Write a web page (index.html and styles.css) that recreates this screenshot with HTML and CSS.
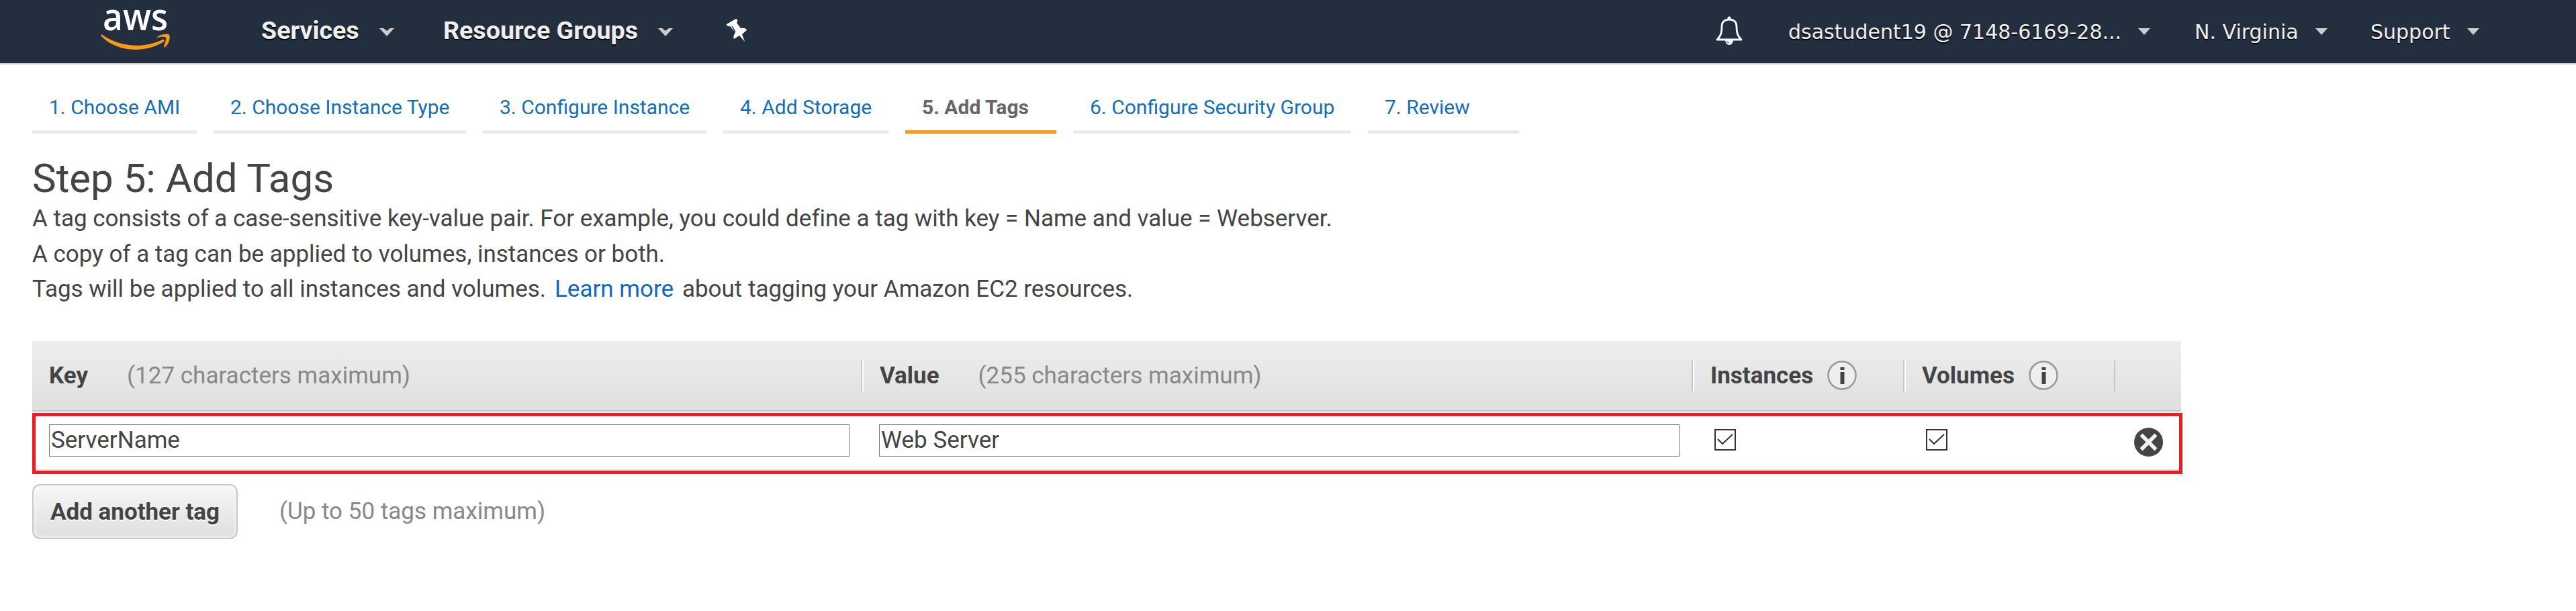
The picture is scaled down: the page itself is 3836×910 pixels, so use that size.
FILE: index.html
```html
<!DOCTYPE html>
<html lang="en">
<head>
<meta charset="utf-8">
<title>Step 5: Add Tags</title>
<link rel="stylesheet" href="styles.css">
</head>
<body>
<header class="navbar">
  <svg class="logo" viewBox="0 0 110 64" aria-label="aws">
    <text class="logo-text" x="4" y="34" textLength="97" lengthAdjust="spacingAndGlyphs">aws</text>
    <path fill="#f8991d" d="M2 43c-2-3 1-3 3-1 27 18 62 19 88 6 3-1 4 1 2 3-26 17-69 17-93-8z"/>
    <path fill="#f8991d" d="M85 44c7-5 17-5 18-3 2 3 0 13-6 18-1 1-2 0-2-1 2-5 4-11 3-13-2-2-8-1-12 0-2 0-2-1-1-1z"/>
  </svg>
  <nav class="nav-main">
    <span class="nav-item services"><span class="t">Services</span><svg class="caret" viewBox="0 0 22 12"><path d="M0 0h6l5 4 5-4h6L11 12z"/></svg></span>
    <span class="nav-item groups"><span class="t">Resource Groups</span><svg class="caret" viewBox="0 0 22 12"><path d="M0 0h6l5 4 5-4h6L11 12z"/></svg></span>
    <svg class="pin" viewBox="0 0 30 34"><path fill="#fff" d="M0 8 14 0q3 1 2 5l-1 1 6 8q8-1 9 3l-7 6 4 11-8-9-8 5q-2-3 2-10L5 11q-5 1-5-3z"/><path d="m8 11 5 8" stroke="#232f3e" stroke-width="1.4"/></svg>
  </nav>
  <nav class="nav-account">
    <svg class="bell" viewBox="0 0 40 44"><circle cx="20" cy="3" r="2.6" fill="#fff"/><path d="M2 35c5-5 7-9 7-20C9 8 14 5 20 5s11 3 11 10c0 11 2 15 7 20z" fill="none" stroke="#fff" stroke-width="2.8" stroke-linejoin="round"/><path d="M14 35h12c0 5-3 8-6 8s-6-3-6-8z" fill="#fff"/><path d="M16 37q1 3 4 3" fill="none" stroke="#232f3e"/></svg>
    <span class="acct user"><span class="t">dsastudent19 @ 7148-6169-28...</span><svg class="caret" viewBox="0 0 22 12"><path d="M0 0h22L11 12z"/></svg></span>
    <span class="acct region"><span class="t">N. Virginia</span><svg class="caret" viewBox="0 0 22 12"><path d="M0 0h22L11 12z"/></svg></span>
    <span class="acct support"><span class="t">Support</span><svg class="caret" viewBox="0 0 22 12"><path d="M0 0h22L11 12z"/></svg></span>
  </nav>
</header>
<main class="content">
  <nav class="tabs">
    <a class="tab">1. Choose AMI</a>
    <a class="tab">2. Choose Instance Type</a>
    <a class="tab">3. Configure Instance</a>
    <a class="tab">4. Add Storage</a>
    <a class="tab active">5. Add Tags</a>
    <a class="tab">6. Configure Security Group</a>
    <a class="tab">7. Review</a>
  </nav>
  <h1 class="title">Step 5: Add Tags</h1>
  <div class="intro">
    <p>A tag consists of a case-sensitive key-value pair. For example, you could define a tag with key = Name and value = Webserver.</p>
    <p>A copy of a tag can be applied to volumes, instances or both.</p>
    <p><span>Tags will be applied to all instances and volumes.</span><a class="learn">Learn more</a><span>about tagging your Amazon EC2 resources.</span></p>
  </div>
  <section class="table">
    <div class="row head">
      <div class="cell key"><b>Key</b><span class="hint">(127 characters maximum)</span></div>
      <div class="cell sep"><b>Value</b><span class="hint">(255 characters maximum)</span></div>
      <div class="cell sep"><b>Instances</b><svg class="info" viewBox="0 0 44 44"><circle cx="22" cy="22" r="20.5"/><path d="M19.5 10h6v4h-6zM19.5 17h6v18h-6z"/></svg></div>
      <div class="cell sep"><b>Volumes</b><svg class="info" viewBox="0 0 44 44"><circle cx="22" cy="22" r="20.5"/><path d="M19.5 10h6v4h-6zM19.5 17h6v18h-6z"/></svg></div>
      <div class="cell sep last"></div>
    </div>
    <div class="row tag">
      <div class="field">ServerName</div>
      <div class="field">Web Server</div>
      <svg class="check" viewBox="0 0 32 32"><path d="M1 1h30v30H1z"/><path d="m5 15 7 7L27 8"/></svg>
      <svg class="check" viewBox="0 0 32 32"><path d="M1 1h30v30H1z"/><path d="m5 15 7 7L27 8"/></svg>
      <svg class="remove" viewBox="0 0 43 43"><circle cx="21.5" cy="21.5" r="21.5" fill="#444"/><path d="m12.5 12.5 18 18M30.500 12.500 12.500 30.500" stroke="#f2f2f2" stroke-width="5.600" stroke-linecap="square"/></svg>
    </div>
  </section>
  <div class="actions">
    <button class="add">Add another tag</button>
    <span class="hint">(Up to 50 tags maximum)</span>
  </div>
</main>
</body>
</html>
```
FILE: styles.css
```css
* { box-sizing: border-box; }
body { margin: 0; width: 3836px; height: 910px; overflow: hidden; background: #fff; color: #444; font: 35px/52.5px Roboto, sans-serif; white-space: nowrap; }
svg { display: block; flex: none; }

.navbar { display: flex; align-items: flex-start; height: 96px; padding-left: 149px; background: #232f3e; border-bottom: 2px solid #ccc; color: #eee; text-shadow: 0 2px 0 #000; }
.logo { width: 110px; height: 64px; margin-top: 11px; overflow: visible; }
.logo-text { font: 600 56px "Open Sans", sans-serif; fill: #fff; text-shadow: none; }
.nav-main { display: flex; align-items: flex-start; margin-left: 130px; }
.nav-item { display: flex; font: bold 37.6px/60px Roboto, sans-serif; padding-top: 15px; }
.services { width: 271px; }
.groups { width: 422px; }
.nav-item .caret { width: 22px; height: 12px; margin: 27px 0 0 30px; fill: #ccc; }
.pin { width: 30px; height: 34px; margin-top: 28px; }
.nav-account { display: flex; margin-left: 1443px; }
.bell { width: 40px; height: 44px; margin: 24px 68px 0 0; }
.acct { display: flex; font: 30px/60px "DejaVu Sans", sans-serif; padding-top: 18px; }
.acct .caret { width: 18px; height: 10px; margin: 24px 0 0 25px; fill: #ccc; }
.user { width: 605px; }
.region { width: 262px; }

.content { padding-left: 48px; }
.tabs { display: grid; grid-template-columns: 245px 376px 333px 246px 225px 414px 225px; gap: 25px; height: 103px; }
.tab { padding: 34px 0 0 25px; font-size: 30px; line-height: 60px; color: #146eb4; border-bottom: 5px solid #ebebeb; }
.tab.active { font-weight: bold; color: #666; border-color: #ff9912; }
.title { margin: 32px 0 0; font-size: 60px; font-weight: 400; line-height: 70px; height: 69px; }
.intro p { display: flex; margin: 0; letter-spacing: -0.015px; }
.learn { margin: 0 13px; color: #0f67c0; }

.table { width: 3202px; margin-top: 50px; }
.row { display: grid; }
.head { grid-template-columns: 1234px 1237px 315px 314px 100px; width: 3200px; height: 105px; align-items: center; background: linear-gradient(#eee, #dfdfdf); border-bottom: 2px solid #c8c8c8; }
.cell { display: flex; align-items: center; height: 47px; padding-left: 26px; }
.cell b, .cell .hint { padding-top: 2px; }
.cell .hint { margin-left: 58px; }
.cell.key { padding-left: 25px; }
.sep { border-left: 2px solid #c8c8c8; box-shadow: inset 2px 0 0 #fff; }
.sep.last { box-shadow: none; }
.hint { color: #888; }
.info { width: 44px; height: 44px; margin-left: 21px; fill: #444; }
.info circle { fill: #eee; stroke: #999; stroke-width: 2.5; }
.tag { grid-template-columns: 1236px 1244px 315px 310px 43px; align-items: start; height: 91px; margin-top: 2px; padding: 12px 0 0 20px; border: 5px solid #ed1c24; box-shadow: inset 0 -2px 0 #ddd; }
.field { width: 1192px; height: 48px; padding-left: 2px; border: 1px solid #777; line-height: 46px; }
.check { width: 32px; height: 32px; margin-top: 7px; fill: none; stroke: #333; stroke-width: 2; }
.remove { width: 43px; height: 43px; margin-top: 5px; }

.actions { display: flex; align-items: center; gap: 62px; margin-top: 15px; }
.actions .hint { padding-top: 2px; }
.add { width: 306px; height: 82px; padding: 2px 0 0; border: 2px solid #c8c8c8; border-radius: 12px; background: linear-gradient(#f7f7f7, #dfdfdf); box-shadow: inset 0 0 4px 2px #fff8; color: #444; font: bold 35px/52px Roboto, sans-serif; text-shadow: 0 2px 0 #fff; }
```
